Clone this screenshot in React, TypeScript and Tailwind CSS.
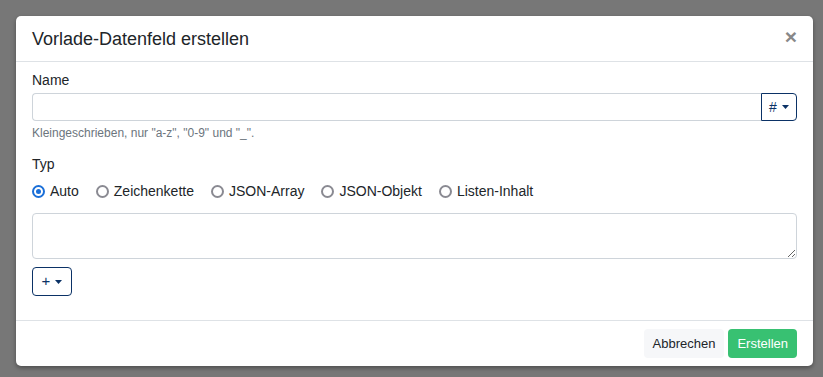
import { useState } from 'react';

const types = ['Auto', 'Zeichenkette', 'JSON-Array', 'JSON-Objekt', 'Listen-Inhalt'];

function Caret() {
  return (
    <svg width="7" height="4" viewBox="0 0 7 4" className="ml-[5px]">
      <path d="M0 0h7L3.5 4z" fill="currentColor" />
    </svg>
  );
}

export default function App() {
  const [type, setType] = useState('Auto');

  return (
    <div
      className="h-[377px] w-[823px] overflow-hidden bg-[#777777] pl-4 pt-4 text-[#212529]"
      style={{ fontFamily: '"Liberation Sans", Arial, sans-serif' }}
    >
      <div className="flex h-[350px] w-[797px] flex-col rounded-[5px] bg-white shadow-[0_2px_4px_rgba(0,0,0,0.35)]">
        <div className="flex h-[46px] items-center justify-between border-b border-[#dee2e6] pl-4 pr-4">
          <h5 className="text-[18px] leading-6">Vorlade-Datenfeld erstellen</h5>
          <button className="mt-[-4px] text-[21px] font-bold leading-none text-[#888]">×</button>
        </div>

        <div className="flex flex-1 flex-col px-4 pt-[8px]">
          <label className="text-[14px] leading-5">Name</label>
          <div className="mt-[3px] flex h-[28px]">
            <input className="h-full flex-1 rounded-l-[4px] border border-r-0 border-[#ced4da] px-2 text-[14px] outline-none" />
            <button className="flex h-full w-[36px] items-center justify-center rounded-r-[4px] border border-[#0b3266] text-[14px] text-[#0b3266]">
              #<Caret />
            </button>
          </div>
          <p className="mt-[4px] text-[12px] leading-4 text-[#6c757d]">
            Kleingeschrieben, nur "a-z", "0-9" und "_".
          </p>

          <label className="mt-[13px] text-[14px] leading-5">Typ</label>
          <div className="mt-[7px] flex items-center gap-[17px]">
            {types.map((t) => (
              <label key={t} className="flex cursor-pointer items-center gap-[5px] text-[14px] leading-5" onClick={() => setType(t)}>
                {type === t ? (
                  <span className="flex h-[13px] w-[13px] items-center justify-center rounded-full border-[2px] border-[#1a6fd8]">
                    <span className="h-[5px] w-[5px] rounded-full bg-[#1a6fd8]" />
                  </span>
                ) : (
                  <span className="h-[13px] w-[13px] rounded-full border-[2px] border-[#8a8a92]" />
                )}
                {t}
              </label>
            ))}
          </div>

          <textarea className="mt-[12px] h-[46px] w-full rounded-[4px] border border-[#ced4da] px-2 text-[14px] outline-none" />

          <button className="mt-[8px] flex h-[29px] w-[40px] items-center justify-center rounded-[4px] border border-[#0b3266] text-[15px] text-[#0b3266]">
            +<Caret />
          </button>
        </div>

        <div className="flex h-[46px] items-center justify-end gap-[4px] border-t border-[#dee2e6] px-4">
          <button className="h-[29px] rounded-[4px] bg-[#f6f7f9] px-[9px] text-[13px] text-[#212529]">Abbrechen</button>
          <button className="h-[29px] rounded-[4px] bg-[#38c172] px-[9px] text-[13px] text-white">Erstellen</button>
        </div>
      </div>
    </div>
  );
}
